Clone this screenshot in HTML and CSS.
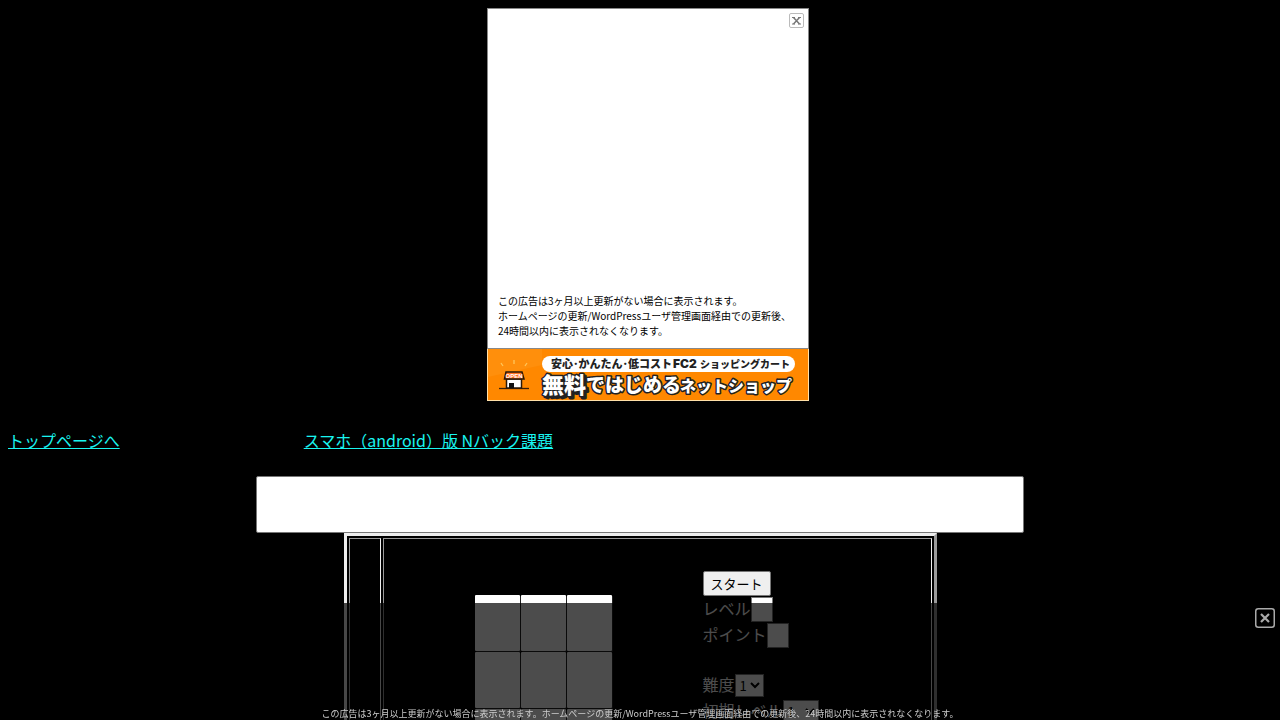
FILE: index.html
```html
<!DOCTYPE html>
<html lang="ja">
<head>
<meta charset="utf-8">
<title>Nバック課題</title>
<link rel="stylesheet" href="styles.css">
</head>
<body>
<aside class="ad">
  <div class="ad-box">
    <button class="ad-close" type="button" aria-label="閉じる">
      <svg width="15" height="15" viewBox="0 0 15 15"><rect x=".5" y=".5" width="14" height="14" rx="1.5" fill="#fff" stroke="#bbb"/><path d="M3 4.500H6M9 4.500h3M3 11H6M9 11h3" fill="none" stroke="#777"/><path d="M4.500 4.500l6 6.500M10.500 4.500l-6 6.500" fill="none" stroke="#777" stroke-width="1.500"/></svg>
    </button>
    <p class="ad-note">この広告は3ヶ月以上更新がない場合に表示されます。<br>ホームページの更新/WordPressユーザ管理画面経由での更新後、<br>24時間以内に表示されなくなります。</p>
  </div>
  <a class="banner" href="#">
    <svg width="320" height="51" viewBox="0 0 320 51">
      <rect width="320" height="51" fill="#ff8800"/>
      <path d="M0 0h54v16L0 28z" fill="#ff8f0c"/>
      <path d="M13 14l2 3M26 11v4M39 14l-2 3" stroke="#ffc65a" stroke-width="1.300"/>
      <path d="M11 39.500h30" stroke="#3a2008" stroke-width="1.300"/>
      <path d="M18.500 30h15v9h-15z" fill="#fff" stroke="#2a1808" stroke-width="1.500"/>
      <path d="M18 23h16l2 7H16.500z" fill="#ff7425" stroke="#2a1808" stroke-width="1.500"/>
      <path d="M21 34h5v5h-5z" fill="#111"/>
      <text x="26" y="29" class="open">OPEN</text>
      <rect x="54" y="7" width="253" height="16" rx="8" fill="#fff"/>
      <g class="lead"><text x="63" y="19">安心･かんたん･低コスト</text><text x="185" y="19" class="latin">FC2</text><text x="212" y="19" class="small">ショッピングカート</text></g>
      <text x="56" y="46" class="big shade">無料</text>
      <text x="54" y="44" class="big">無料</text>
      <text x="98" y="43" class="mid">ではじめる</text>
      <text x="192" y="43" class="mid2">ネットショップ</text>
    </svg>
  </a>
</aside>
<nav class="links"><a href="#">トップページへ</a><a href="#">スマホ（android）版 Nバック課題</a></nav>
<main>
  <input class="message" type="text" aria-label="メッセージ" readonly>
  <div class="frame">
    <div class="cell"></div>
    <div class="cell game">
      <div class="board"><i></i><i></i><i></i><i></i><i></i><i></i><i></i><i></i><i></i></div>
      <form class="controls">
        <div class="start-row"><button class="start" type="button">スタート</button></div>
        <div class="row"><label for="level">レベル</label><input class="count" id="level" type="text" readonly></div>
        <div class="row"><label for="point">ポイント</label><input class="count" id="point" type="text" readonly></div>
        <div class="row settings"><label for="diff">難度</label><select id="diff"><option>1</option><option>2</option></select></div>
        <div class="row"><label for="first">初期レベル</label><select class="wide" id="first"><option>1</option><option>2</option></select></div>
      </form>
    </div>
  </div>
</main>
<footer class="overlay">
  <button class="overlay-close" type="button" aria-label="閉じる">
    <svg width="20" height="20" viewBox="0 0 20 20"><rect x=".75" y=".75" width="18.500" height="18.500" rx="2.500" fill="#000" stroke="#aaa" stroke-width="1.500"/><path d="M6 6l8 8M14 6l-8 8" stroke="#aaa" stroke-width="2.200"/></svg>
  </button>
  <p>この広告は3ヶ月以上更新がない場合に表示されます。ホームページの更新/WordPressユーザ管理画面経由での更新後、24時間以内に表示されなくなります。</p>
</footer>
</body>
</html>
```
FILE: styles.css
```css
* { box-sizing: border-box; }
html { scrollbar-width: none; }
body {
  margin: 8px;
  background: #000;
  color: #fff;
  font: 16px/24px "Noto Sans CJK JP", sans-serif;
}
p { margin: 0; }
button { padding: 0; font-family: inherit; cursor: pointer; }
svg { display: block; }
.ad {
  width: 322px;
  margin: 0 auto;
  position: relative;
  left: 8px;
}
.ad-box {
  display: flex;
  flex-direction: column;
  justify-content: space-between;
  align-items: flex-end;
  height: 341px;
  padding: 4px 4px 10px 10px;
  border: 1px solid #888;
  background: #fff;
}
.ad-close, .overlay-close { border: 0; background: none; }
.ad-note {
  align-self: stretch;
  color: #000;
  font-size: 10px;
  line-height: 15px;
  white-space: nowrap;
}
.banner { display: block; border: 1px solid #ffe0a8; border-top: 0; }
.banner text { font-weight: 900; }
.banner .open { font: 700 6px "Liberation Sans", sans-serif; fill: #fff; text-anchor: middle; }
.lead { font-size: 11px; fill: #222; }
.lead .latin { font: 900 12px Inter, sans-serif; }
.lead .small { font-size: 10px; }
.big, .mid, .mid2 { fill: #fff; stroke: #222; stroke-width: 3px; paint-order: stroke; stroke-linejoin: round; }
.big { font-size: 22px; }
.big.shade { fill: #222; }
.mid { font-size: 19px; }
.mid2 { font-size: 16px; }
.links { display: flex; gap: 184px; margin-top: 27px; }
.links a { color: #19f5f0; }
main { display: flex; flex-direction: column; align-items: center; margin: 24px -8px 0; }
.message {
  width: 60%;
  height: 57px;
  border: 1px solid #767676;
  border-radius: 2px;
  background: #fff;
}
.frame {
  display: flex;
  gap: 2px;
  width: 593px;
  padding: 2px;
  border: 3px solid;
  border-color: #eee #999 #999 #eee;
}
.cell { width: 32px; border: 1px solid; border-color: #999 #eee #eee #999; }
.game { flex: 1; display: flex; padding: 32px 0 24px; }
.board {
  display: grid;
  grid-template-columns: repeat(3, 45px);
  grid-auto-rows: 56px;
  gap: 1px;
  align-self: flex-start;
  margin: 24px 91px 0 91px;
  padding-bottom: 1px;
}
.board i { border-radius: 1px; outline: 1px solid #555; outline-offset: -1px; background: #fff; }
.board i { outline: 0; box-shadow: 1px 1px #222; }
.start { width: 68px; height: 25px; border: 1px solid #767676; border-radius: 2px; background: #efefef; color: #000; font-size: 13px; line-height: 20px; }
.start-row { display: flex; height: 25px; }
.row { display: flex; align-items: center; height: 26px; }
.row label { padding-bottom: 2px; }
.count { width: 22px; height: 25px; border: 1px solid #767676; background: #fff; }
.settings { margin-top: 24px; }
select { width: 29px; height: 23px; padding: 0; border: 1px solid #767676; border-radius: 0; background: #fff; color: #000; font: 13px "Noto Sans CJK JP", sans-serif; }
select.wide { width: 36px; }
.overlay {
  position: fixed;
  right: 0;
  bottom: 0;
  left: 0;
  display: flex;
  flex-direction: column;
  align-items: flex-end;
  justify-content: space-between;
  height: 117px;
  padding-top: 5px;
  background: rgba(0, 0, 0, .7);
}
.overlay-close { margin-right: 5px; }
.overlay p { align-self: stretch; color: #ccc; font-size: 9px; line-height: 13px; text-align: center; }
```
